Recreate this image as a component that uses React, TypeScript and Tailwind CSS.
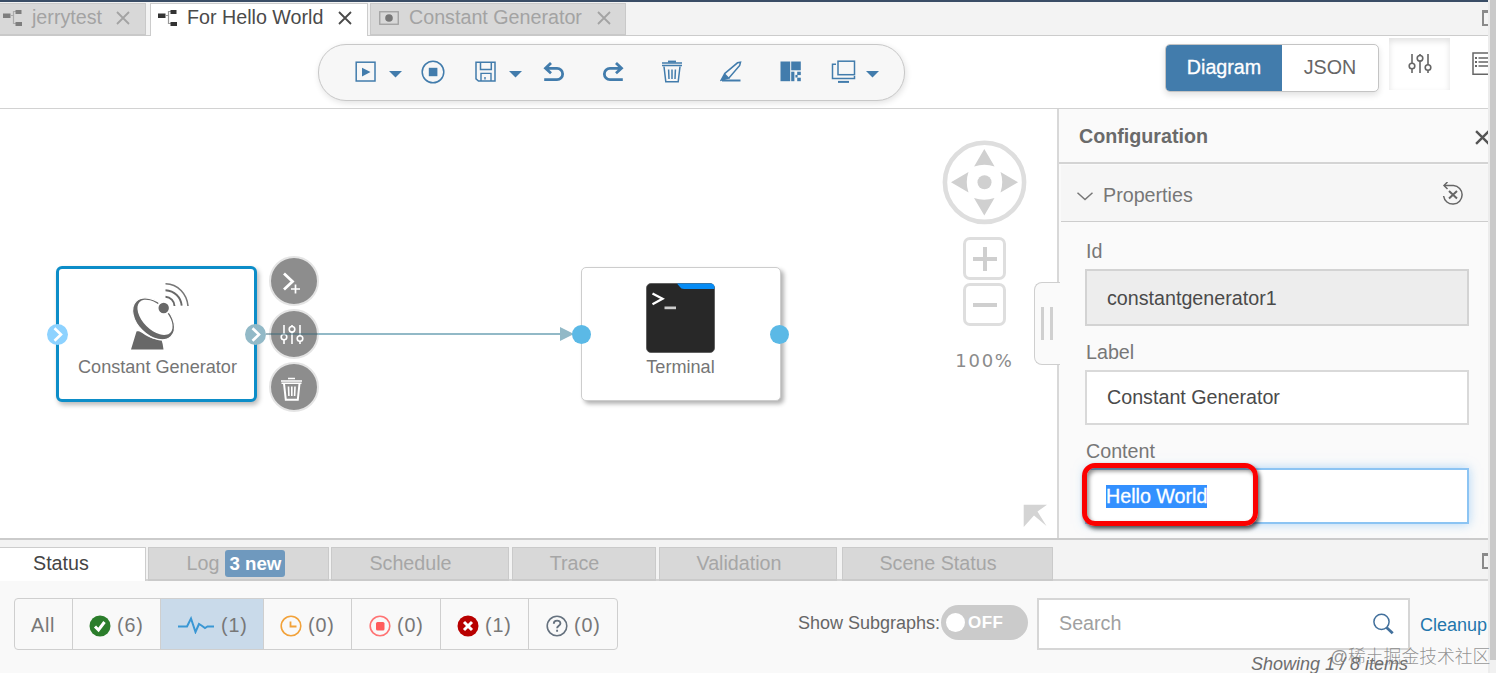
import type { ReactNode } from "react";
import { clsx } from "clsx";

const BLUE = "#427cac";

/* ---------- icons ---------- */

function GraphIcon({ className }: { className?: string }) {
  return (
    <svg width="20" height="18" viewBox="0 0 20 18" className={className} fill="currentColor">
      <rect x="0" y="4.5" width="7.5" height="4.5" />
      <rect x="12.5" y="1" width="6" height="4" />
      <rect x="12.5" y="13" width="6.5" height="4" />
      <path d="M8 6.5h2.5M13 2.5h-2.5v12H13" fill="none" stroke="currentColor" strokeWidth="1.2" opacity="0.5" />
    </svg>
  );
}

function CloseIcon({ size = 14, width = 1.8 }: { size?: number; width?: number }) {
  return (
    <svg width={size} height={size} viewBox="0 0 14 14" className="shrink-0">
      <path d="M1 1l12 12M13 1L1 13" stroke="currentColor" strokeWidth={width} />
    </svg>
  );
}

function Caret({ className }: { className?: string }) {
  return (
    <svg width="13" height="7" viewBox="0 0 13 7" className={clsx("mt-[5px]", className)}>
      <path d="M0 0h13L6.5 6.6z" fill={BLUE} />
    </svg>
  );
}

function ToolIcon({ width = 22, className, children }: { width?: number; className?: string; children: ReactNode }) {
  return (
    <svg
      width={width}
      height="24"
      viewBox={`0 0 ${width} 24`}
      className={clsx("shrink-0", className)}
      fill="none"
      stroke={BLUE}
      strokeWidth="1.5"
    >
      {children}
    </svg>
  );
}

function SlidersIcon() {
  return (
    <svg width="24" height="22" viewBox="0 0 24 22" fill="none" stroke="currentColor" strokeWidth="1.6">
      <path d="M4 1v9M4 16v4M12 1v2M12 8v12M20 1v11M20 17v3" />
      <circle cx="4" cy="13" r="2.8" />
      <circle cx="12" cy="5.3" r="2.8" />
      <circle cx="20" cy="14.5" r="2.8" />
    </svg>
  );
}

function MaximizeIcon() {
  return (
    <span className="ml-auto h-4 w-[6px] shrink-0 border-y-2 border-l-2 border-t-[3px] border-[#8a8a8a]" />
  );
}

/* ---------- top ---------- */

function EditorTabs() {
  return (
    <div className="flex h-[36px] shrink-0 border-t-2 border-[#3a4d66] bg-[#f3f3f3] pt-px text-[19.7px] leading-none">
      <div className="flex w-[146px] items-center border-b-2 border-t border-r border-[#c9c9c9] bg-[#d8d8d8] pl-[3px] pb-[2px] text-[#a3a3a3]">
        <GraphIcon className="text-[#7e7e7e]" />
        <span className="ml-[9px] w-[84px]">jerrytest</span>
        <CloseIcon />
      </div>
      <div className="w-[4px] border-b border-[#ccc]" />
      <div className="flex w-[218px] items-center border-x border-t border-[#ccc] bg-white pl-[7px] pb-[4px] text-[#4a4a4a]">
        <GraphIcon className="text-[#333]" />
        <span className="ml-[9px] w-[151px]">For Hello World</span>
        <CloseIcon />
      </div>
      <div className="w-[2px] border-b border-[#ccc]" />
      <div className="flex w-[256px] items-center border-b-2 border-x border-t border-[#c9c9c9] bg-[#d8d8d8] pl-[8px] pb-[2px] text-[#a3a3a3]">
        <svg width="20" height="15" viewBox="0 0 20 15" className="shrink-0">
          <rect x="0.75" y="0.75" width="18.5" height="12.5" fill="none" stroke="#a0a0a0" strokeWidth="1.3" />
          <circle cx="10" cy="7" r="3.8" fill="#777" />
        </svg>
        <span className="ml-[10px] w-[188px]">Constant Generator</span>
        <CloseIcon />
      </div>
      <div className="flex flex-1 items-center border-b border-[#ccc] pb-[3px]">
        <MaximizeIcon />
      </div>
    </div>
  );
}

function Toolbar() {
  return (
    <div className="ml-[318px] mt-[8px] flex h-[57px] w-[587px] items-center rounded-[28px] border-[1.5px] border-[#c8c8c8] bg-[#f7f7f7] pl-[36px] pb-px shadow-[1px_2px_6px_rgba(0,0,0,0.12)]">
      <ToolIcon>
        <rect x="1.2" y="2.2" width="18.8" height="18.8" />
        <path d="M7 7.8v8.6l8.5-4.3z" fill={BLUE} stroke="none" />
      </ToolIcon>
      <Caret className="ml-[12px]" />
      <ToolIcon width={24} className="ml-[19px]">
        <circle cx="12" cy="12" r="10.8" />
        <rect x="7.8" y="7.8" width="8.6" height="8.4" fill={BLUE} stroke="none" />
      </ToolIcon>
      <ToolIcon className="ml-[30px]">
        <path d="M1 2.2h19v18.8H3.5L1 18.8z" />
        <path d="M5.5 2.2v7.3h10.8V2.2" />
        <path d="M6 21v-7.6h10V21M10 17v2.5" strokeWidth="1.4" />
      </ToolIcon>
      <Caret className="ml-[12px]" />
      <ToolIcon className="ml-[21px]">
        <path d="M8 3L2.5 8.3l5.5 5M2.5 8.3h11.5a5.6 5.6 0 010 11.3H1.2" strokeWidth="2.8" />
      </ToolIcon>
      <ToolIcon className="ml-[37px]">
        <path d="M14 3l5.5 5.3-5.5 5M19.5 8.3H8a5.6 5.6 0 000 11.3h12.8" strokeWidth="2.8" />
      </ToolIcon>
      <ToolIcon className="ml-[37px]">
        <path d="M1 3h20M1 5.4h20" />
        <path d="M7 1.6h8" strokeWidth="2" />
        <path d="M3 6.5l1.8 15.3h12.4L19 6.5" />
        <path d="M7.6 9.5l.4 9.5M11 9.5V19M14.4 9.5L14 19" />
      </ToolIcon>
      <ToolIcon className="ml-[37px]">
        <path d="M1.2 20.2l3.3-6.2 4 4.2z" fill={BLUE} />
        <path d="M4.3 13.8L17.5 2.8l3-.6-.8 3.2L8.7 18.2" />
        <path d="M2 20.5h18.5" strokeWidth="2" />
      </ToolIcon>
      <ToolIcon className="ml-[38px]">
        <g fill={BLUE} stroke="none">
          <rect x="0.5" y="1.5" width="9.7" height="19.7" />
          <rect x="11.2" y="1.5" width="9.6" height="8.8" />
          <rect x="11.2" y="11.7" width="3.2" height="9.5" />
          <rect x="15.4" y="14.9" width="2.2" height="2.6" />
          <rect x="17.2" y="11.7" width="3.6" height="3.4" />
          <rect x="17.2" y="17.7" width="3.6" height="3.5" />
        </g>
      </ToolIcon>
      <ToolIcon width={25} className="ml-[29px]">
        <rect x="7" y="1.2" width="16.5" height="13.5" />
        <path d="M5 4.2H1.5v14.4h22V16" />
        <path d="M7 21.9h11" strokeWidth="2" />
      </ToolIcon>
      <Caret className="ml-[10px]" />
    </div>
  );
}

function Header() {
  return (
    <div className="flex h-[73px] shrink-0 overflow-hidden border-b border-[#d2d2d2] bg-white">
      <Toolbar />
      <div className="ml-[260px] mt-[8px] flex h-[48px] w-[214px] items-stretch overflow-hidden rounded-[5px] border-[1.5px] border-[#c4c4c4] bg-white text-[19.7px] leading-[44px] shadow-[0_3px_6px_rgba(0,0,0,0.12)]">
        <div className="w-[116px] rounded-l-[3px] bg-[#427cac] text-center text-white [-webkit-text-stroke:0.3px_white]">
          Diagram
        </div>
        <div className="flex-1 text-center text-[#666]">JSON</div>
      </div>
      <div className="ml-[10px] mt-[2px] flex h-[52px] w-[61px] items-center justify-center text-[#666] shadow-[inset_0_3px_6px_rgba(0,0,0,0.12)]">
        <SlidersIcon />
      </div>
      <svg width="16" height="24" viewBox="0 0 16 24" className="ml-[22px] mt-[16px] shrink-0" fill="none" stroke="#666" strokeWidth="1.5">
        <path d="M16 1H1v21.3h15M6.5 6H16M6.5 10H16M6.5 14H16" />
        <path d="M3 6h2M3 10h2M3 14h2" strokeWidth="1.8" />
      </svg>
    </div>
  );
}

/* ---------- canvas ---------- */

function AntennaIcon() {
  return (
    <svg width="60" height="68" viewBox="0 0 60 68" fill="none" className="absolute left-[71px] top-[13px]">
      <path d="M6.5 49.500C12 48 15 57 31.500 58Q33 62 33.500 67.500H1z" fill="#686868" />
      <ellipse cx="23.6" cy="36.8" rx="24.8" ry="16.2" transform="rotate(45 23.6 36.8)" fill="#686868" stroke="#fff" strokeWidth="1.2" />
      <ellipse cx="25" cy="35.3" rx="21.7" ry="12.2" transform="rotate(45 25 35.3)" fill="#fff" />
      <circle cx="33.7" cy="26" r="7.1" fill="#fff" />
      <circle cx="33.7" cy="26" r="5.2" fill="#686868" />
      <path d="M35.5 14.7a9.5 9.5 0 019 9.3M35.5 8.2c9 .5 15.500 7 16.200 15.500" stroke="#686868" strokeWidth="1.9" />
      <path d="M35.5 1.8C48 2 57 12 58 24" stroke="#777" strokeWidth="1.6" />
    </svg>
  );
}

function TerminalIcon() {
  return (
    <svg width="69" height="70" viewBox="0 0 69 70" className="absolute left-[64px] top-[15px]">
      <rect x="0.5" y="0.5" width="68" height="69" rx="4.5" fill="#282828" stroke="#555" strokeWidth="0.8" />
      <path d="M31 .5h33.5a4 4 0 014 4V6H38q-3 0-4.500-2.500z" fill="#078cf5" />
      <path d="M6.5 10.500l10 5.300-10 5.400" fill="none" stroke="#fff" strokeWidth="2.3" />
      <rect x="18.5" y="23.5" width="11.5" height="2.7" fill="#ccc" />
    </svg>
  );
}

function Port({ className }: { className?: string }) {
  return (
    <span className={clsx("absolute flex h-[21px] w-[21px] items-center justify-center rounded-full", className)}>
      <svg width="10" height="15" viewBox="0 0 10 15">
        <path d="M1.5 1.2l6.5 6.3-6.5 6.3" fill="none" stroke="#fff" strokeWidth="2.6" />
      </svg>
    </span>
  );
}

function NodeAction({ className, children }: { className?: string; children: ReactNode }) {
  return (
    <div
      className={clsx(
        "absolute left-[269px] flex h-[50px] w-[50px] items-center justify-center rounded-full border-2 border-[#e4e4e4] bg-[#8d8d8d] text-white",
        className,
      )}
    >
      {children}
    </div>
  );
}

function NavControls() {
  return (
    <div className="absolute left-[942px] top-[31px] flex w-[85px] flex-col items-center">
      <svg width="85" height="85" viewBox="0 0 85 85" fill="#d0d0d0">
        <circle cx="42.5" cy="42.3" r="39.6" fill="#fff" stroke="#dedede" strokeWidth="4.6" />
        <path d="M42.3 9l10.3 17.5q-10-3.5-20.5 0z" />
        <path d="M42.3 75.5L32 58q10 3.5 20.5 0z" />
        <path d="M9 42.3l17.5-10.3q-3.5 10 0 20.5z" />
        <path d="M76 42.3L58.5 32q3.5 10 0 20.5z" />
        <circle cx="42.5" cy="42.3" r="7" />
      </svg>
      <div className="mt-[12px] flex h-[43px] w-[43px] items-center justify-center rounded-[7px] border-3 border-[#dedede]">
        <svg width="26" height="26" viewBox="0 0 26 26" stroke="#cfcfcf" strokeWidth="4">
          <path d="M1 13h24M13 1v24" />
        </svg>
      </div>
      <div className="mt-[3px] flex h-[43px] w-[43px] items-center justify-center rounded-[7px] border-3 border-[#dedede]">
        <span className="h-[4px] w-6 bg-[#cfcfcf]" />
      </div>
      <span className="mt-[23px] font-['DejaVu_Sans'] text-[18px] leading-[24px] tracking-[1.7px] text-[#8b8b8b]">
        100%
      </span>
    </div>
  );
}

function Canvas() {
  return (
    <div className="relative w-[1057px] shrink-0 overflow-hidden bg-white">
      <div className="absolute left-[56px] top-[157px] h-[136px] w-[201px] rounded-[6px] border-[3.5px] border-[#0c8dc8] bg-white shadow-[2px_3px_5px_rgba(0,0,0,0.28)]">
        <AntennaIcon />
        <p className="absolute left-[1px] top-[86px] w-full text-center text-[18.1px] leading-[24px] text-[#757575]">
          Constant Generator
        </p>
      </div>
      <Port className="left-[47px] top-[215px] bg-[#8dd2ff]" />
      <Port className="left-[245px] top-[215px] bg-[#92b9c7]" />

      <NodeAction className="top-[147px]">
        <svg width="24" height="24" viewBox="0 0 24 24" fill="none" stroke="#fff" className="-ml-[2px] mt-0.5">
          <path d="M3 3.500l8.500 8L3 19.500" strokeWidth="2.8" />
          <path d="M10 19h9M14.5 14.500v9" strokeWidth="1.7" />
        </svg>
      </NodeAction>
      <NodeAction className="top-[200px]">
        <span className="-ml-1 mt-0.5 flex">
          <SlidersIcon />
        </span>
      </NodeAction>
      <NodeAction className="top-[253px]">
        <svg width="24" height="25" viewBox="0 0 24 25" fill="none" stroke="#fff" strokeWidth="2" className="-ml-1 mt-1">
          <path d="M1 4h21M8 1.500h7M1.500 6.200h20" strokeWidth="1.5" />
          <path d="M4 6.500l1.800 16.300h12L19.500 6.500" />
          <path d="M8.5 9.500l.4 9.500M11.800 9.500V19M15 9.500l-.4 9.500" strokeWidth="1.6" />
        </svg>
      </NodeAction>

      <div className="absolute left-[318px] top-[224px] h-[2px] w-[244px] bg-[#92b9c7]" />
      <div className="absolute left-[266px] top-[224px] h-[2px] w-[52px] bg-[#3d6b7c]/50" />

      <div className="absolute left-[581px] top-[158px] h-[134px] w-[200px] rounded-[5px] border-[1.5px] border-[#cdcdcd] bg-white shadow-[3px_3px_4px_rgba(0,0,0,0.3)]">
        <TerminalIcon />
        <p className="absolute left-0 top-[87px] w-full pr-px text-center text-[18.1px] leading-[24px] text-[#757575]">
          Terminal
        </p>
      </div>
      <svg width="15" height="14" viewBox="0 0 15 14" className="absolute left-[560px] top-[218px]">
        <path d="M0 0l14 7-14 7z" fill="#92b9c7" />
      </svg>
      <span className="absolute left-[572px] top-[216px] h-[19px] w-[19px] rounded-full bg-[#5bb9e6]" />
      <span className="absolute left-[770px] top-[216px] h-[19px] w-[19px] rounded-full bg-[#5bb9e6]" />

      <NavControls />
      <svg width="24" height="23" viewBox="0 0 24 23" className="absolute left-[1023px] top-[395px]">
        <path d="M.7.7H24L14.5 7.500l9 14.500L11 11.500.7 23z" fill="#d4d4d4" />
      </svg>
    </div>
  );
}

/* ---------- configuration panel ---------- */

function ConfigPanel() {
  return (
    <div className="relative flex min-w-0 flex-1 flex-col border-l-2 border-[#d8d8d8] bg-[#fafafa] text-[19.7px] text-[#777]">
      <div className="flex h-[55px] shrink-0 items-center justify-between overflow-hidden border-b-2 border-[#d4d4d4] pl-[20px]">
        <h2 className="mt-[2px] text-[19.7px] font-bold text-[#6a6a6a]">Configuration</h2>
        <span className="-mr-[2px] mt-[3px] text-[#555]">
          <CloseIcon size={15} width={2.2} />
        </span>
      </div>
      <div className="ml-[2px] mt-px flex h-[57px] shrink-0 items-center border-b-[1.5px] border-[#cdcdcd] bg-[#f6f6f6] pl-[16px] pt-[6px]">
        <svg width="16" height="9" viewBox="0 0 16 9" fill="none" stroke="#777" strokeWidth="1.5">
          <path d="M.5.8L8 7.6 15.500.8" />
        </svg>
        <span className="ml-[10px]">Properties</span>
        <svg width="22" height="24" viewBox="0 0 22 24" fill="none" stroke="#666" strokeWidth="1.5" className="ml-auto mr-[24px] -mt-1">
          <path d="M2 3.500h9.500a9.300 9.300 0 11-9.900 10.500" />
          <path d="M5.500 0L2 3.500 5.500 7" />
          <path d="M7 9l8 7.500M15 9l-8 7.500" strokeWidth="2" />
        </svg>
      </div>

      <div className="flex flex-col pl-[26px] pr-[19px] pt-[16px]">
        <label className="pl-px leading-[26px]">Id</label>
        <input
          readOnly
          value="constantgenerator1"
          className="mt-[5px] h-[57px] border-2 border-[#d3d3d3] bg-[#ededed] px-[20px] pt-px text-[#4a4a4a]"
        />
        <label className="mt-[13px] pl-px leading-[26px]">Label</label>
        <input
          readOnly
          value="Constant Generator"
          className="mt-[5px] h-[55px] border-2 border-[#d9d9d9] bg-white px-[20px] text-[#4a4a4a]"
        />
        <label className="mt-[13px] pl-px leading-[26px]">Content</label>
        <div className="relative mt-[4px] flex h-[56px] items-center border-2 border-[#8cc4f3] bg-white pl-[19px] shadow-[0_0_10px_rgba(125,190,245,0.6)]">
          <span className="bg-[#3390ff] leading-[23px] text-white [-webkit-text-stroke:0.3px_white]">Hello World</span>
          <div className="absolute -left-[5px] -top-[7px] h-[63px] w-[176px] rounded-[13px] border-[5px] border-[#fb0000] shadow-[2px_3px_4px_rgba(0,0,0,0.65),inset_2px_3px_4px_rgba(0,0,0,0.45)]" />
        </div>
      </div>

      <div className="absolute -left-[25px] top-[173px] flex h-[83px] w-[26px] items-center gap-[6px] rounded-l-[8px] border-y-[1.5px] border-l-[1.5px] border-[#cfcfcf] bg-[#fafafa] pl-[6px]">
        <span className="h-[33px] w-[3px] bg-[#d0d0d0]" />
        <span className="h-[33px] w-[3px] bg-[#d0d0d0]" />
      </div>
    </div>
  );
}

/* ---------- bottom ---------- */

function BottomTab({ className, children }: { className?: string; children: ReactNode }) {
  return (
    <div
      className={clsx(
        "flex shrink-0 items-center justify-center border-x border-t border-b-2 border-[#cacaca] bg-[#d8d8d8] text-[#a6a6a6]",
        className,
      )}
    >
      {children}
    </div>
  );
}

function BottomTabs() {
  return (
    <div className="flex h-[43px] shrink-0 border-t-2 border-[#cbcbcb] bg-[#f3f3f3] text-[19.7px] leading-none">
      <div className="mt-[7px] flex w-[146px] items-center border-r border-t border-[#cdcdcd] bg-white pb-px pl-[33px] text-[#444]">
        Status
      </div>
      <div className="w-[2px] border-b-2 border-[#d4d4d4]" />
      <BottomTab className="mt-[7px] w-[181px] gap-[6px] pr-[5px]">
        Log
        <span className="rounded-[3px] bg-[#6f99be] px-[4px] text-[18.7px] font-bold leading-[27px] text-white">3 new</span>
      </BottomTab>
      <div className="w-[2px] border-b-2 border-[#d4d4d4]" />
      <BottomTab className="mt-[7px] w-[178px] pr-[19px]">Schedule</BottomTab>
      <div className="w-[3px] border-b-2 border-[#d4d4d4]" />
      <BottomTab className="mt-[7px] w-[144px] pr-[19px]">Trace</BottomTab>
      <div className="w-[3px] border-b-2 border-[#d4d4d4]" />
      <BottomTab className="mt-[7px] w-[178px] pr-[18px]">Validation</BottomTab>
      <div className="w-[5px] border-b-2 border-[#d4d4d4]" />
      <BottomTab className="mt-[7px] w-[211px] pr-[19px]">Scene Status</BottomTab>
      <div className="flex flex-1 items-center border-b-2 border-[#d4d4d4] pt-[3px]">
        <MaximizeIcon />
      </div>
    </div>
  );
}

function StatusCell({ className, children }: { className?: string; children: ReactNode }) {
  return (
    <div className={clsx("flex items-center border-l-[1.5px] border-[#cfcfcf] pt-[3px] tracking-[0.9px]", className)}>
      {children}
    </div>
  );
}

function StatusIcon({ children }: { children: ReactNode }) {
  return (
    <svg width="22" height="22" viewBox="0 0 22 22" fill="none" strokeWidth="1.6" className="mr-[6px] shrink-0">
      {children}
    </svg>
  );
}

function StatusBar() {
  return (
    <div className="flex min-h-0 flex-1 overflow-hidden bg-[#f9f9f9] pt-[17px] text-[19.7px] text-[#777]">
      <div className="ml-[14px] flex h-[52px] w-[604px] shrink-0 overflow-hidden rounded-[4px] border-[1.5px] border-[#cfcfcf]">
        <div className="flex w-[57px] items-center pl-[16px] pt-[3px] tracking-[0.8px]">All</div>
        <StatusCell className="w-[88px] pl-[16px]">
          <StatusIcon>
            <circle cx="11" cy="11" r="10.5" fill="#2b7d2b" />
            <path d="M6 11.500l3.500 3.500L15.500 7" stroke="#fff" strokeWidth="3" />
          </StatusIcon>
          (6)
        </StatusCell>
        <StatusCell className="w-[103px] bg-[#c9daea] pl-[16px]">
          <svg width="38" height="18" viewBox="0 0 38 18" fill="none" stroke="#3a97d4" strokeWidth="2" className="mr-[6px] -mt-[2px] shrink-0">
            <path d="M1 10.500h9l4-8 4.500 13.500L22 8l2.500 1.500L28 12l2.500-1.500H37" />
          </svg>
          (1)
        </StatusCell>
        <StatusCell className="w-[88px] pl-[16px]">
          <StatusIcon>
            <circle cx="11" cy="11" r="9.8" stroke="#f2a23a" />
            <path d="M10.500 6.500v5h6" stroke="#f2a23a" strokeWidth="1.8" />
          </StatusIcon>
          (0)
        </StatusCell>
        <StatusCell className="w-[89px] pl-[17px]">
          <StatusIcon>
            <circle cx="11" cy="11" r="9.8" stroke="#ff7474" />
            <rect x="7" y="7" width="8.5" height="8.5" rx="1.5" fill="#ff5c5c" />
          </StatusIcon>
          (0)
        </StatusCell>
        <StatusCell className="w-[88px] pl-[16px]">
          <StatusIcon>
            <circle cx="11" cy="11" r="10.5" fill="#b80000" />
            <path d="M7 7l8 8M15 7l-8 8" stroke="#fff" strokeWidth="3" />
          </StatusIcon>
          (1)
        </StatusCell>
        <StatusCell className="flex-1 pl-[17px]">
          <StatusIcon>
            <circle cx="11" cy="11" r="9.8" stroke="#66727f" />
            <path d="M7.800 8.700c0-4 6.600-4 6.600-.3 0 2.300-3.300 2.400-3.300 4.800M11.100 14.700v2" stroke="#66727f" strokeWidth="1.9" />
          </StatusIcon>
          (0)
        </StatusCell>
      </div>

      <div className="ml-[180px] flex h-[50px] w-[143px] shrink-0 items-center whitespace-nowrap text-[18px] text-[#666]">
        Show Subgraphs:
      </div>
      <div className="mt-[7px] flex h-[35px] w-[87px] shrink-0 items-center rounded-full bg-[#cbcbcb] pl-[5px] text-[17px] font-bold tracking-[0.5px] text-white">
        <span className="mr-[3px] h-[19px] w-[19px] rounded-full bg-white" />
        OFF
      </div>

      <div className="ml-[9px] w-[373px] shrink-0">
        <div className="flex h-[52px] items-center justify-between border-2 border-[#d6d6d6] bg-white pl-[20px] pr-[13px] text-[#a0a0a0]">
          Search
          <svg width="23" height="22" viewBox="0 0 23 22" fill="none" stroke="#42709c">
            <circle cx="9.5" cy="8.8" r="7.6" strokeWidth="1.5" />
            <path d="M14.500 14.500l6.200 5.800" strokeWidth="2.8" />
          </svg>
        </div>
        <p className="mt-[2px] whitespace-nowrap pr-[2px] text-right text-[18px] italic leading-[24px] text-[#6d6d6d]">
          Showing 1 / 8 items
        </p>
      </div>
      <a className="ml-[10px] mt-[14px] text-[18px] leading-[26px] text-[#2276ac]">Cleanup</a>
    </div>
  );
}

export default function App() {
  return (
    <div className="relative flex h-[673px] w-[1496px] overflow-hidden bg-white font-['Liberation_Sans',sans-serif]">
      <div className="flex w-[1488px] shrink-0 flex-col overflow-hidden">
        <EditorTabs />
        <Header />
        <div className="flex h-[429px] shrink-0">
          <Canvas />
          <ConfigPanel />
        </div>
        <BottomTabs />
        <StatusBar />
      </div>
      <div className="w-[8px] border-l-2 border-[#ececec] bg-[#f1f1f1]">
        <div className="h-[660px] bg-[#cacaca]" />
      </div>
      <span className="absolute left-[1330px] top-[644px] whitespace-nowrap font-['Liberation_Sans','Noto_Sans_CJK_SC',sans-serif] text-[17.8px] font-light leading-[26px] text-[#777]/80">
        @稀土掘金技术社区
      </span>
    </div>
  );
}
